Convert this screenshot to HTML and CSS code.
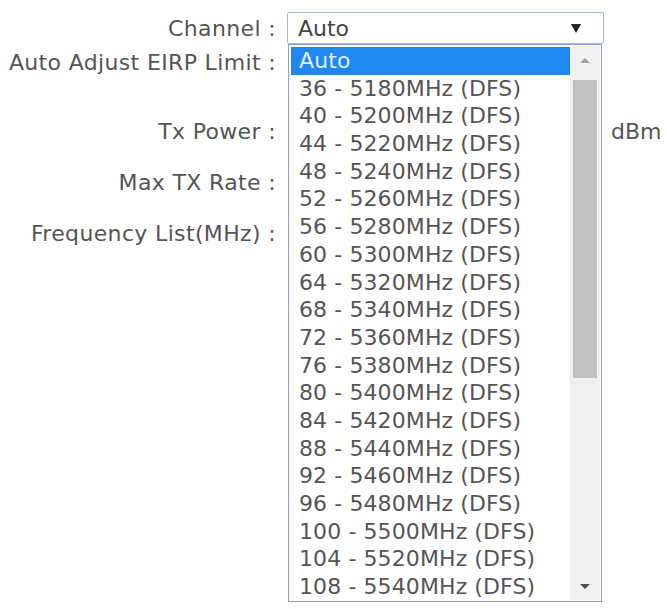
FILE: index.html
```html
<!DOCTYPE html>
<html>
  <head>
    <title>Wireless Settings</title>
    <link rel="stylesheet" href="styles.css">
  </head>
  <body>
    <div class="settings-form">
      <div class="form-row row-channel">
        <div class="form-label">Channel :</div>
        <div class="form-control">
          <div class="select-box">
            <span class="select-value">Auto</span>
            <span class="select-arrow"></span>
          </div>
        </div>
      </div>
      <div class="form-row row-eirp">
        <div class="form-label">Auto Adjust EIRP Limit :</div>
        <div class="form-control"></div>
      </div>
      <div class="form-row row-power">
        <div class="form-label">Tx Power :</div>
        <div class="form-control">
          <div class="power-input"></div>
          <span class="unit">dBm</span>
        </div>
      </div>
      <div class="form-row row-rate">
        <div class="form-label">Max TX Rate :</div>
        <div class="form-control"></div>
      </div>
      <div class="form-row row-freq">
        <div class="form-label">Frequency List(MHz) :</div>
        <div class="form-control"></div>
      </div>

      <div class="channel-list">
        <div class="options">
          <div class="option selected">Auto</div>
          <div class="option">36 - 5180MHz (DFS)</div>
          <div class="option">40 - 5200MHz (DFS)</div>
          <div class="option">44 - 5220MHz (DFS)</div>
          <div class="option">48 - 5240MHz (DFS)</div>
          <div class="option">52 - 5260MHz (DFS)</div>
          <div class="option">56 - 5280MHz (DFS)</div>
          <div class="option">60 - 5300MHz (DFS)</div>
          <div class="option">64 - 5320MHz (DFS)</div>
          <div class="option">68 - 5340MHz (DFS)</div>
          <div class="option">72 - 5360MHz (DFS)</div>
          <div class="option">76 - 5380MHz (DFS)</div>
          <div class="option">80 - 5400MHz (DFS)</div>
          <div class="option">84 - 5420MHz (DFS)</div>
          <div class="option">88 - 5440MHz (DFS)</div>
          <div class="option">92 - 5460MHz (DFS)</div>
          <div class="option">96 - 5480MHz (DFS)</div>
          <div class="option">100 - 5500MHz (DFS)</div>
          <div class="option">104 - 5520MHz (DFS)</div>
          <div class="option">108 - 5540MHz (DFS)</div>
        </div>
        <div class="scrollbar">
          <div class="scroll-up"></div>
          <div class="scroll-track">
            <div class="scroll-thumb"></div>
          </div>
          <div class="scroll-down"></div>
        </div>
      </div>
    </div>
  </body>
</html>
```

FILE: styles.css
```css
body {
  margin: 0;
  background-color: #fff;
  font-family: "DejaVu Sans", Verdana, sans-serif;
  font-size: 22px;
  color: #555;
}
.settings-form {
  position: relative;
  height: 609px;
  box-sizing: border-box;
  padding-top: 12px;
}
.form-row {
  display: flex;
  align-items: center;
}
.form-label {
  width: 276px;
  text-align: right;
  white-space: nowrap;
  letter-spacing: 0.35px;
}
.form-control {
  display: flex;
  align-items: center;
  margin-left: 11px;
}
.row-channel {
  height: 32px;
}
.row-eirp {
  height: 36px;
}
.row-power {
  height: 102px;
}
.row-rate {
  height: 0;
}
.row-freq {
  height: 102px;
}
.select-box {
  box-sizing: border-box;
  width: 317px;
  height: 32px;
  border: 1px solid #a9b7d6;
  border-radius: 2px;
  display: flex;
  align-items: center;
  justify-content: space-between;
  padding: 0 22px 0 10px;
  color: #444;
}
.select-arrow {
  width: 0;
  height: 0;
  border-left: 5px solid transparent;
  border-right: 5px solid transparent;
  border-top: 9px solid #222;
}
.power-input {
  width: 310px;
  height: 30px;
}
.unit {
  margin-left: 14px;
}
.channel-list {
  position: absolute;
  top: 44px;
  left: 288px;
  width: 312px;
  height: 556px;
  border: 1px solid #8e9fd6;
  background-color: #fff;
  display: flex;
  overflow: hidden;
}
.options {
  flex: 1;
  padding: 2px 0 0 2px;
  overflow: hidden;
}
.option {
  height: 27.7px;
  line-height: 27.7px;
  padding-left: 8px;
  white-space: nowrap;
  letter-spacing: 0.1px;
}
.option.selected {
  background-color: #1e88f0;
  color: #dff0ff;
}
.scrollbar {
  width: 30px;
  margin: 1px 1px 1px 0;
  background-color: #f0f0f0;
  display: flex;
  flex-direction: column;
}
.scroll-up,
.scroll-down {
  height: 28px;
  display: flex;
  align-items: center;
  justify-content: center;
}
.scroll-up::after {
  content: "";
  border-left: 5px solid transparent;
  border-right: 5px solid transparent;
  border-bottom: 5px solid #a3a3a3;
}
.scroll-down::after {
  content: "";
  border-left: 5px solid transparent;
  border-right: 5px solid transparent;
  border-top: 5px solid #505050;
}
.scroll-track {
  flex: 1;
  padding: 6px 3px 0 3px;
}
.scroll-thumb {
  height: 298px;
  background-color: #c1c1c1;
}
```
